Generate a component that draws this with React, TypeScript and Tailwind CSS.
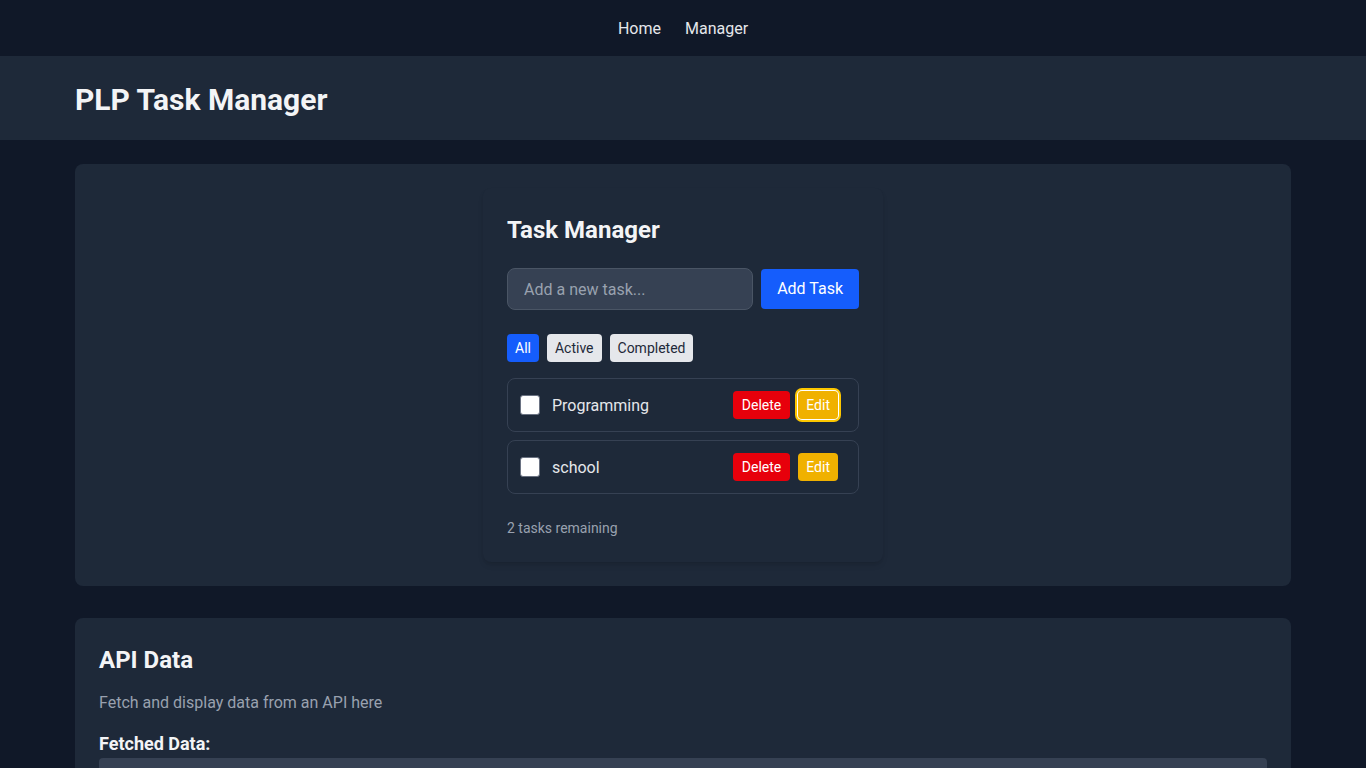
import React from "react";

const tasks = [
  { id: 1, text: "Programming", focused: true },
  { id: 2, text: "school", focused: false },
];

export default function App() {
  return (
    <div
      className="min-h-screen bg-gray-900 text-gray-100"
      style={{ fontFamily: 'Roboto, "Noto Sans", sans-serif' }}
    >
      <nav className="bg-gray-900 pb-[15px] pt-[17px]">
        <div className="flex justify-center gap-6 text-base text-gray-200">
          <a className="cursor-pointer">Home</a>
          <a className="cursor-pointer">Manager</a>
        </div>
      </nav>

      <header className="bg-gray-800 pb-[22px] pt-[26px]">
        <div className="mx-auto max-w-7xl px-8">
          <h1 className="text-3xl font-bold text-gray-100">PLP Task Manager</h1>
        </div>
      </header>

      <main className="mx-auto max-w-7xl px-8 py-6">
        <section className="rounded-lg bg-gray-800 p-6">
          <div className="mx-auto w-[400px] rounded-lg bg-gray-800 p-6 shadow-md">
            <h2 className="mb-[22px] pt-[2px] text-2xl font-bold text-gray-100">Task Manager</h2>

            <div className="mb-6 flex items-center gap-2">
              <input
                type="text"
                placeholder="Add a new task..."
                className="h-[42px] min-w-0 flex-1 rounded-lg border border-gray-600 bg-gray-700 px-4 text-base text-gray-100 placeholder-gray-400 outline-none"
              />
              <button className="h-10 shrink-0 whitespace-nowrap rounded bg-blue-600 px-4 text-base text-white">
                Add Task
              </button>
            </div>

            <div className="mb-4 flex gap-2">
              <button className="rounded bg-blue-600 px-2 py-1 text-sm text-white">All</button>
              <button className="rounded bg-gray-200 px-2 py-1 text-sm text-gray-800">Active</button>
              <button className="rounded bg-gray-200 px-2 py-1 text-sm text-gray-800">Completed</button>
            </div>

            <ul className="flex flex-col gap-2">
              {tasks.map((t) => (
                <li
                  key={t.id}
                  className="flex items-center justify-between rounded-lg border border-gray-700 py-3 pl-3 pr-5"
                >
                  <div className="flex items-center gap-3">
                    <span className="block h-5 w-5 rounded-[3px] border border-gray-500 bg-white" />
                    <span className="pt-[2px] text-base text-gray-200">{t.text}</span>
                  </div>
                  <div className="flex items-center gap-2">
                    <button className="h-7 rounded bg-red-600 px-[9px] text-sm text-white">Delete</button>
                    <button
                      className={
                        t.focused
                          ? "h-7 rounded bg-yellow-500 px-2 text-sm text-white ring-2 ring-yellow-400 ring-offset-1 ring-offset-white"
                          : "h-7 rounded bg-yellow-500 px-2 text-sm text-white"
                      }
                    >
                      Edit
                    </button>
                  </div>
                </li>
              ))}
            </ul>

            <p className="mt-6 text-sm text-gray-400">2 tasks remaining</p>
          </div>
        </section>

        <section className="mt-8 rounded-lg bg-gray-800 p-6">
          <h2 className="mb-[14px] pt-[2px] text-2xl font-bold text-gray-100">API Data</h2>
          <p className="mb-[15px] pt-[1px] text-base text-gray-400">Fetch and display data from an API here</p>
          <h3 className="text-lg font-bold text-gray-100">Fetched Data:</h3>
          <pre className="h-40 rounded bg-gray-700 p-4 text-sm text-gray-200"></pre>
        </section>
      </main>
    </div>
  );
}
